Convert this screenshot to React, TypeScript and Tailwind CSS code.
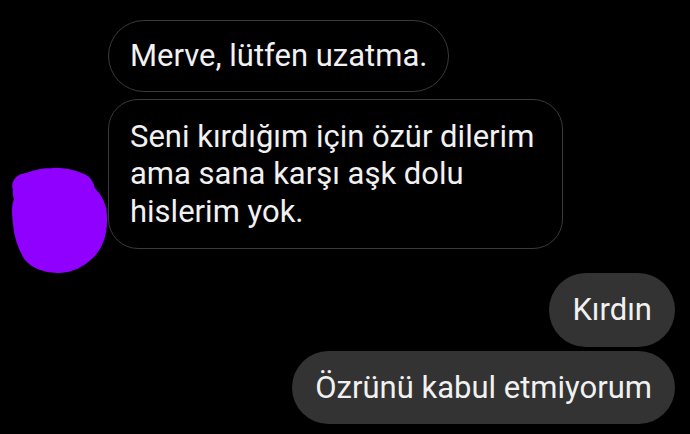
import React from "react";

const incoming = [
  { text: "Merve, lütfen uzatma.", shape: "rounded-full" },
  {
    text: "Seni kırdığım için özür dilerim ama sana karşı aşk dolu hislerim yok.",
    shape: "rounded-[30px] max-w-[455px]",
  },
];

const outgoing = ["Kırdın", "Özrünü kabul etmiyorum"];

function Scribble() {
  // purple blob drawn over the sender's avatar
  return (
    <svg
      className="absolute left-0 top-[160px]"
      width="120"
      height="120"
      viewBox="0 0 120 120"
    >
      <path
        d="M15 30 C12 22 18 16 26 15 C34 12 42 10 52 10 C62 9 74 12 84 16 C90 19 92 24 93 29 C100 36 106 46 105 60 C105 74 102 86 92 96 C84 104 74 110 60 111 C46 112 32 106 26 98 C20 88 16 76 15 64 C14 54 13 46 16 39 C15 36 14 33 15 30 Z"
        fill="#9000ff"
        stroke="#9000ff"
        strokeWidth="4"
        strokeLinejoin="round"
      />
    </svg>
  );
}

export default function App() {
  return (
    <div
      className="relative h-[434px] w-full overflow-hidden bg-black text-[31px] leading-[37.5px] text-[#f1f1f1]"
      style={{ fontFamily: "Roboto, 'Noto Sans', sans-serif" }}
    >
      <Scribble />
      <div className="flex flex-col items-start gap-[7px] pl-[108px] pt-5">
        {incoming.map((m) => (
          <div
            key={m.text}
            className={`border-[1.5px] border-[#3a3a3a] px-[21px] ${
              m.shape === "rounded-full" ? "rounded-full py-4" : "rounded-[30px] max-w-[455px] py-[18px]"
            }`}
          >
            {m.text}
          </div>
        ))}
      </div>
      <div className="mt-6 flex flex-col items-end gap-1 pr-[15px]">
        {outgoing.map((t) => (
          <div key={t} className="rounded-full bg-[#333333] px-[23px] py-[18px]">
            {t}
          </div>
        ))}
      </div>
    </div>
  );
}
